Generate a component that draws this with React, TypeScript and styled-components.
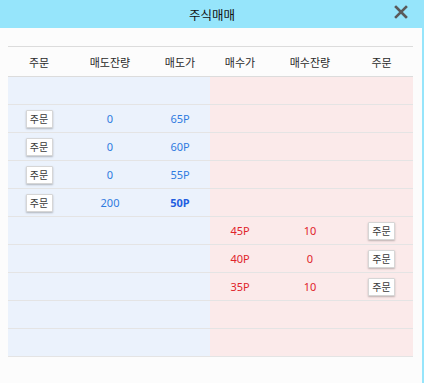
import React from "react";
import styled, { createGlobalStyle } from "styled-components";

const Global = createGlobalStyle`
  html, body { margin: 0; padding: 0; background: #fcfcfc; }
  body { font-family: "Noto Sans CJK KR", "Noto Sans", sans-serif; }
`;

const Frame = styled.div`
  width: 424px;
  height: 383px;
  background: #96e5fb;
  display: flex;
  flex-direction: column;
  overflow: hidden;
`;

const TitleBar = styled.div`
  height: 28px;
  position: relative;
  display: flex;
  align-items: center;
  justify-content: center;
  font-size: 12.5px;
  color: #111;
  flex-shrink: 0;
`;

const Close = styled.button`
  position: absolute;
  right: 14px;
  top: 3px;
  width: 18px;
  height: 18px;
  padding: 0;
  border: none;
  background: transparent;
  display: flex;
  align-items: center;
  justify-content: center;
`;

const Body = styled.div`
  flex: 1;
  margin-right: 2px;
  background: #fcfcfc;
  padding: 18px 9px 0 8px;
`;

const Table = styled.div`
  border-top: 1px solid #dcdcdc;
`;

const Grid = styled.div`
  display: grid;
  grid-template-columns: 62px 80px 60px 60px 80px 63px;
`;

const HeaderRow = styled(Grid)`
  height: 29px;
  border-bottom: 1px solid #dcdcdc;
`;

const HeadCell = styled.div`
  display: flex;
  align-items: center;
  justify-content: center;
  font-size: 11px;
  color: #2a2a2a;
`;

const Row = styled(Grid)`
  height: 27px;
  border-bottom: 1px solid #e4e4e4;
`;

const Cell = styled.div<{ $side: "sell" | "buy" }>`
  display: flex;
  align-items: center;
  justify-content: center;
  font-size: 11px;
  font-family: "Noto Sans", sans-serif;
  background: ${(p) => (p.$side === "sell" ? "#ebf2fc" : "#fbeaea")};
  color: ${(p) => (p.$side === "sell" ? "#2f7be0" : "#e0242a")};
`;

const Strong = styled.span`
  font-weight: bold;
  color: #1f5ee0;
`;

const OrderButton = styled.button`
  width: 27px;
  height: 18px;
  padding: 0;
  background: #fff;
  border: 1px solid #d6d6d6;
  border-radius: 1px;
  box-shadow: 0 1px 2px rgba(0, 0, 0, 0.25);
  font-family: "Noto Sans CJK KR", sans-serif;
  font-size: 10px;
  color: #3a3a3a;
  line-height: 16px;
`;

type RowData = {
  sellQty?: string;
  sellPrice?: string;
  buyPrice?: string;
  buyQty?: string;
  bold?: boolean;
};

const rows: RowData[] = [
  {},
  { sellQty: "0", sellPrice: "65P" },
  { sellQty: "0", sellPrice: "60P" },
  { sellQty: "0", sellPrice: "55P" },
  { sellQty: "200", sellPrice: "50P", bold: true },
  { buyPrice: "45P", buyQty: "10" },
  { buyPrice: "40P", buyQty: "0" },
  { buyPrice: "35P", buyQty: "10" },
  {},
  {},
];

export default function App() {
  return (
    <>
      <Global />
      <Frame>
        <TitleBar>
          주식매매
          <Close aria-label="close">
            <svg width="14" height="14" viewBox="0 0 14 14">
              <path d="M2 2L12 12M12 2L2 12" stroke="#5a5a5a" strokeWidth="2.6" strokeLinecap="square" />
            </svg>
          </Close>
        </TitleBar>
        <Body>
          <Table>
            <HeaderRow>
              <HeadCell>주문</HeadCell>
              <HeadCell>매도잔량</HeadCell>
              <HeadCell>매도가</HeadCell>
              <HeadCell>매수가</HeadCell>
              <HeadCell>매수잔량</HeadCell>
              <HeadCell>주문</HeadCell>
            </HeaderRow>
            {rows.map((r, i) => (
              <Row key={i}>
                <Cell $side="sell">{r.sellPrice && <OrderButton>주문</OrderButton>}</Cell>
                <Cell $side="sell">{r.sellQty}</Cell>
                <Cell $side="sell">{r.bold ? <Strong>{r.sellPrice}</Strong> : r.sellPrice}</Cell>
                <Cell $side="buy">{r.buyPrice}</Cell>
                <Cell $side="buy">{r.buyQty}</Cell>
                <Cell $side="buy">{r.buyPrice && <OrderButton>주문</OrderButton>}</Cell>
              </Row>
            ))}
          </Table>
        </Body>
      </Frame>
    </>
  );
}
